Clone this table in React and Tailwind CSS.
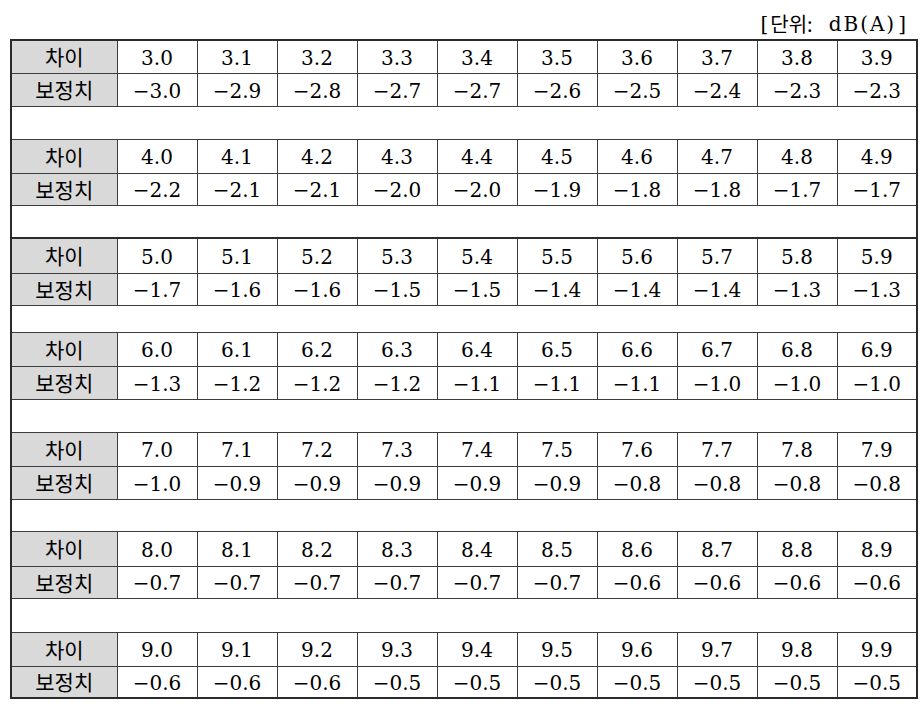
import React from 'react';

const groups = [
  { start: 3, fix: ['3.0', '2.9', '2.8', '2.7', '2.7', '2.6', '2.5', '2.4', '2.3', '2.3'], h1: 'h-[33px]', h2: 'h-[33px]', gap: 'h-[33px]' },
  { start: 4, fix: ['2.2', '2.1', '2.1', '2.0', '2.0', '1.9', '1.8', '1.8', '1.7', '1.7'], h1: 'h-[34px]', h2: 'h-[32px]', gap: 'h-[33px]' },
  { start: 5, fix: ['1.7', '1.6', '1.6', '1.5', '1.5', '1.4', '1.4', '1.4', '1.3', '1.3'], h1: 'h-[35px] border-t-2 border-[#2b2b2b]', h2: 'h-[32px]', gap: 'h-[27px]' },
  { start: 6, fix: ['1.3', '1.2', '1.2', '1.2', '1.1', '1.1', '1.1', '1.0', '1.0', '1.0'], h1: 'h-[34px]', h2: 'h-[33px]', gap: 'h-[33px]' },
  { start: 7, fix: ['1.0', '0.9', '0.9', '0.9', '0.9', '0.9', '0.8', '0.8', '0.8', '0.8'], h1: 'h-[34px]', h2: 'h-[33px]', gap: 'h-[32px]' },
  { start: 8, fix: ['0.7', '0.7', '0.7', '0.7', '0.7', '0.7', '0.6', '0.6', '0.6', '0.6'], h1: 'h-[35px]', h2: 'h-[32px]', gap: 'h-[34px]' },
  { start: 9, fix: ['0.6', '0.6', '0.6', '0.5', '0.5', '0.5', '0.5', '0.5', '0.5', '0.5'], h1: 'h-[34px]', h2: 'h-[32px]', gap: null },
];

const numCell = "border border-[#3c3c3c] text-center text-[20px] leading-none p-0 pt-[2px] font-['DejaVu_Serif','Liberation_Serif',serif]";
const headCell = "border border-[#3c3c3c] bg-[#d9d9d9] text-center text-[21px] leading-none p-0 font-['Noto_Sans_CJK_KR','Noto_Sans',sans-serif]";

export default function App() {
  return (
    <div className="w-[922px] h-[704px] bg-white text-black pl-[10px] pt-[8px]">
      <div className="w-[896px] h-[31px] flex justify-end items-center text-[20px] leading-none">
        <span className="font-['DejaVu_Serif',serif]">[</span>
        <span className="ml-[2px] text-[20px] font-['Noto_Sans_CJK_KR','Noto_Sans',sans-serif]">단위:</span>
        <span className="ml-[16px] tracking-[2px] font-['DejaVu_Serif','Liberation_Serif',serif]">dB(A)</span>
        <span className="ml-[2px] font-['DejaVu_Serif',serif]">]</span>
      </div>
      <table className="table-fixed border-collapse w-[906px] border-2 border-[#2b2b2b]">
        <colgroup>
          <col className="w-[106px]" />
          {Array.from({ length: 10 }).map((_, i) => (
            <col key={i} className="w-[80px]" />
          ))}
        </colgroup>
        <tbody>
          {groups.map((g) => (
            <React.Fragment key={g.start}>
              <tr className={g.h1}>
                <td className={headCell}>차이</td>
                {Array.from({ length: 10 }).map((_, i) => (
                  <td key={i} className={numCell}>
                    {g.start}.{i}
                  </td>
                ))}
              </tr>
              <tr className={g.h2}>
                <td className={headCell}>보정치</td>
                {g.fix.map((v, i) => (
                  <td key={i} className={numCell}>
                    −{v}
                  </td>
                ))}
              </tr>
              {g.gap && (
                <tr className={g.gap}>
                  <td colSpan={11} className="border border-[#3c3c3c] p-0"></td>
                </tr>
              )}
            </React.Fragment>
          ))}
        </tbody>
      </table>
    </div>
  );
}
